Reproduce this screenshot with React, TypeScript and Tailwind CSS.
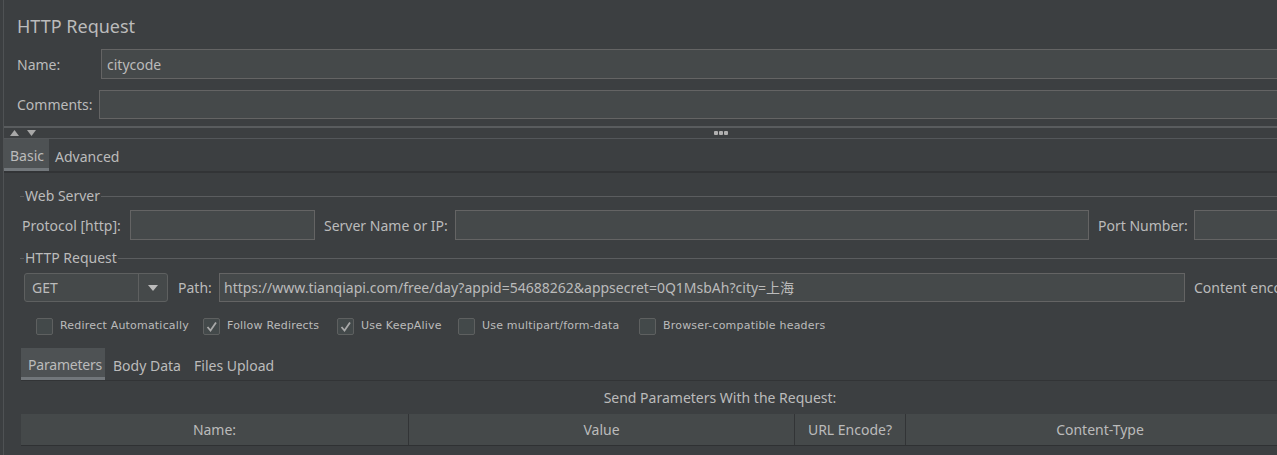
const font = "font-['Noto_Sans','Noto_Sans_CJK_SC',sans-serif]";

function Input({ className = "", value = "" }: { className?: string; value?: string }) {
  return (
    <div className={`flex items-center bg-[#45494a] border border-[#646464] px-[4px] text-[14px] whitespace-nowrap overflow-hidden ${className}`}>
      {value}
    </div>
  );
}

function TitledLine({ title }: { title: string }) {
  return (
    <div className="flex items-center h-[20px]">
      <div className="w-[4px] h-px bg-[#5b5d5f]" />
      <span className="px-[1px] text-[14px] leading-[20px]">{title}</span>
      <div className="flex-1 h-px bg-[#5b5d5f]" />
    </div>
  );
}

function Check({ checked, label, width }: { checked?: boolean; label: string; width?: string }) {
  return (
    <div className={`flex items-center gap-[7px] ${width ?? ""}`}>
      <div className="w-[17px] h-[17px] rounded-[2px] border border-[#5e6060] bg-[#43494a] flex items-center justify-center">
        {checked && (
          <svg width="13" height="13" viewBox="0 0 13 13">
            <polyline points="2.5,7 5.5,10.5 11,2.5" fill="none" stroke="#a9a9a9" strokeWidth="1.8" />
          </svg>
        )}
      </div>
      <span className="font-['DejaVu_Sans',sans-serif] text-[11px] tracking-[0.2px] whitespace-nowrap">{label}</span>
    </div>
  );
}

export default function App() {
  return (
    <div className={`w-[1277px] h-[455px] overflow-hidden bg-[#3c3f41] text-[#bbbbbb] ${font}`}>
      <div className="ml-[3px] w-[1433px] h-full border-l border-[#4f5254]">
        {/* header */}
        <div className="pl-[13px] pt-[14px] h-[49px] text-[18px] leading-[24px]">HTTP Request</div>
        <div className="flex items-center h-[30px] pl-[13px]">
          <span className="w-[84px] text-[14px]">Name:</span>
          <Input className="flex-1 h-[30px] pl-[5px]" value="citycode" />
        </div>
        <div className="flex items-center h-[29px] mt-[11px] pl-[13px]">
          <span className="w-[82px] text-[14px]">Comments:</span>
          <Input className="flex-1 h-[29px]" />
        </div>

        {/* splitter */}
        <div className="mt-[7px] h-[2px] bg-[#595c5e]" />
        <div className="relative h-[10px]">
          <div className="absolute left-[6px] top-[2px] flex gap-[8px]">
            <svg width="9" height="6" viewBox="0 0 9 6"><polygon points="0,6 4.5,0 9,6" fill="#a8a8a8" /></svg>
            <svg width="9" height="6" viewBox="0 0 9 6"><polygon points="0,0 9,0 4.5,6" fill="#a8a8a8" /></svg>
          </div>
          <div className="absolute left-[710px] top-[3px] flex gap-[1px]">
            <div className="w-[4px] h-[4px] rounded-[1px] bg-[#b0b0b0]" />
            <div className="w-[4px] h-[4px] rounded-[1px] bg-[#b0b0b0]" />
            <div className="w-[4px] h-[4px] rounded-[1px] bg-[#b0b0b0]" />
          </div>
        </div>
        <div className="h-px bg-[#54575a]" />

        {/* tabs */}
        <div className="flex h-[34px] border-b-2 border-[#323436] text-[14px]">
          <div className="w-[45px] pl-[6px] pt-[3px] flex items-center bg-[#4e5254] border-b-[3px] border-[#72777b]">Basic</div>
          <div className="px-[6px] pt-[3px] flex items-center">Advanced</div>
        </div>

        {/* basic panel */}
        <div className="ml-[16px] mt-[13px] text-[14px]">
          <TitledLine title="Web Server" />
          <div className="flex items-center h-[30px] mt-[4px] ml-[2px]">
            <span className="w-[108px]">Protocol [http]:</span>
            <Input className="w-[185px] h-[30px]" />
            <span className="w-[140px] pl-[9px]">Server Name or IP:</span>
            <Input className="w-[634px] h-[30px]" />
            <span className="w-[105px] pl-[9px]">Port Number:</span>
            <Input className="w-[230px] h-[30px]" />
          </div>

          <div className="mt-[8px]">
            <TitledLine title="HTTP Request" />
          </div>
          <div className="flex items-center h-[29px] mt-[5px] ml-[4px]">
            <div className="w-[144px] h-[29px] flex rounded-[3px] border border-[#5e6060] bg-[#45494a]">
              <div className="flex-1 flex items-center pl-[7px] border-r border-[#5e6060]">GET</div>
              <div className="w-[28px] flex items-center justify-center">
                <svg width="10" height="6" viewBox="0 0 10 6"><polygon points="0,0 10,0 5,6" fill="#bbbbbb" /></svg>
              </div>
            </div>
            <span className="w-[51px] pl-[10px]">Path:</span>
            <Input className="w-[966px] h-[29px]" value="https://www.tianqiapi.com/free/day?appid=54688262&appsecret=0Q1MsbAh?city=上海" />
            <span className="pl-[9px] whitespace-nowrap">Content encoding:</span>
          </div>

          <div className="flex items-center h-[17px] mt-[16px] ml-[16px]">
            <Check label="Redirect Automatically" width="w-[167px]" />
            <Check checked label="Follow Redirects" width="w-[134px]" />
            <Check checked label="Use KeepAlive" width="w-[121px]" />
            <Check label="Use multipart/form-data" width="w-[181px]" />
            <Check label="Browser-compatible headers" />
          </div>

          {/* parameters */}
          <div className="ml-[1px] w-[1398px] mt-[13px]">
            <div className="flex h-[33px] border-b border-[#323436] whitespace-nowrap">
              <div className="w-[84px] pl-[7px] pt-[3px] flex items-center bg-[#4e5254] border-b-[3px] border-[#72777b] tracking-[-0.2px]">Parameters</div>
              <div className="w-[89px] pl-[8px] pt-[3px] flex items-center">Body Data</div>
              <div className="pt-[3px] flex items-center">Files Upload</div>
            </div>
            <div className="h-[33px] flex items-center justify-center">Send Parameters With the Request:</div>
            <div className="flex h-[32px] bg-[#45494a] border-b border-[#2f3133]">
              <div className="w-[388px] flex items-center justify-center border-r border-[#323436]">Name:</div>
              <div className="w-[386px] flex items-center justify-center border-r border-[#323436]">Value</div>
              <div className="w-[111px] flex items-center justify-center border-r border-[#323436]">URL Encode?</div>
              <div className="w-[389px] flex items-center justify-center border-r border-[#323436]">Content-Type</div>
              <div className="flex-1 flex items-center justify-center">Include Equals?</div>
            </div>
          </div>
        </div>
      </div>
    </div>
  );
}
